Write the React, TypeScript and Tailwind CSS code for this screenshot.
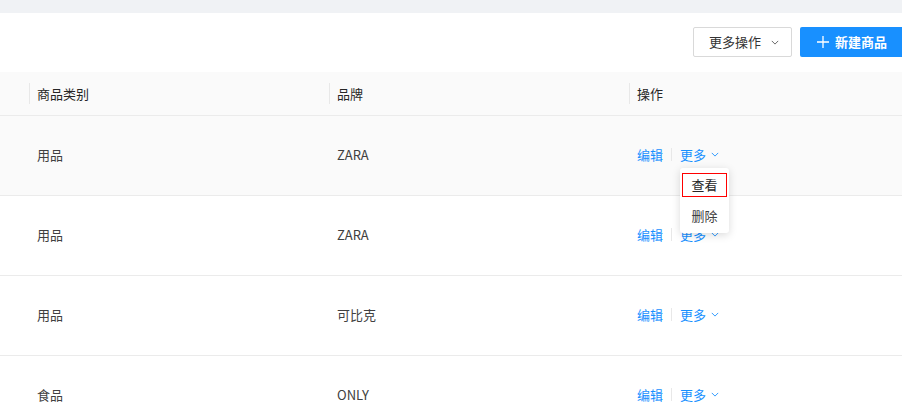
const ROWS = [
  { category: "用品", brand: "ZARA" },
  { category: "用品", brand: "ZARA" },
  { category: "用品", brand: "可比克" },
  { category: "食品", brand: "ONLY" },
];

function Chevron({ className }: { className?: string }) {
  return (
    <svg viewBox="0 0 10 6" className={className} fill="none" stroke="currentColor" strokeWidth="1.1">
      <path d="M1 1l4 4 4-4" />
    </svg>
  );
}

function HeaderCell({ label }: { label: string }) {
  return (
    <div className="flex items-center">
      <span className="h-[21px] w-px bg-[#e8e8e8]" />
      <span className="ml-[7px]">{label}</span>
    </div>
  );
}

export default function App() {
  return (
    <div
      className="relative w-[902px] h-[411px] overflow-hidden bg-white text-[13px] text-[#404040]"
      style={{ fontFamily: '"Noto Sans CJK SC", "Noto Sans", sans-serif' }}
    >
      <div className="h-[13px] bg-[#f0f2f5]" />

      {/* toolbar */}
      <div className="-mr-[8px] flex h-[59px] items-center justify-end gap-2 pb-[1px]">
        <button className="flex h-[30px] w-[99px] items-center rounded-[2px] border border-[#d9d9d9] bg-white pl-[15px] text-[#333]">
          <span>更多操作</span>
          <Chevron className="ml-[10px] h-[5px] w-[8px] text-[#555]" />
        </button>
        <button className="flex h-[30px] w-[110px] shrink-0 items-center rounded-[2px] bg-[#1890ff] pl-[17px] font-semibold text-white">
          <svg viewBox="0 0 12 12" className="h-[12px] w-[12px]" stroke="currentColor" strokeWidth="1.3">
            <path d="M6 0v12M0 6h12" />
          </svg>
          <span className="ml-[6px]">新建商品</span>
        </button>
      </div>

      {/* table */}
      <div className="w-[929px]">
        <div className="grid h-[44px] grid-cols-[29px_300px_300px_300px] border-b border-[#ebebeb] bg-[#fafafa] text-[#262626]">
          <div />
          <HeaderCell label="商品类别" />
          <HeaderCell label="品牌" />
          <HeaderCell label="操作" />
        </div>

        {ROWS.map((row, i) => (
          <div
            key={i}
            className={`grid h-[80px] grid-cols-[29px_300px_300px_300px] items-center border-b border-[#ebebeb] pb-[2px] ${
              i === 0 ? "bg-[#fafafa]" : "bg-white"
            }`}
          >
            <div />
            <div className="pl-[8px]">{row.category}</div>
            <div className="pl-[8px]">{row.brand}</div>
            <div className="flex items-center pl-[8px] text-[#1890ff]">
              <span>编辑</span>
              <span className="mx-[8px] h-[13px] w-px bg-[#e8e8e8]" />
              <span>更多</span>
              <Chevron className="ml-[5px] h-[5px] w-[8px]" />
            </div>
          </div>
        ))}
      </div>

      {/* dropdown menu */}
      <div className="absolute left-[680px] top-[168px] w-[49px] rounded-[3px] bg-white px-[2px] py-[5px] shadow-[0_2px_8px_rgba(0,0,0,0.15)]">
        <div className="flex h-[24px] items-center justify-center border border-[#f00] text-[#262626]">查看</div>
        <div className="mt-[7px] flex h-[24px] items-center justify-center text-[#404040]">删除</div>
      </div>
    </div>
  );
}
